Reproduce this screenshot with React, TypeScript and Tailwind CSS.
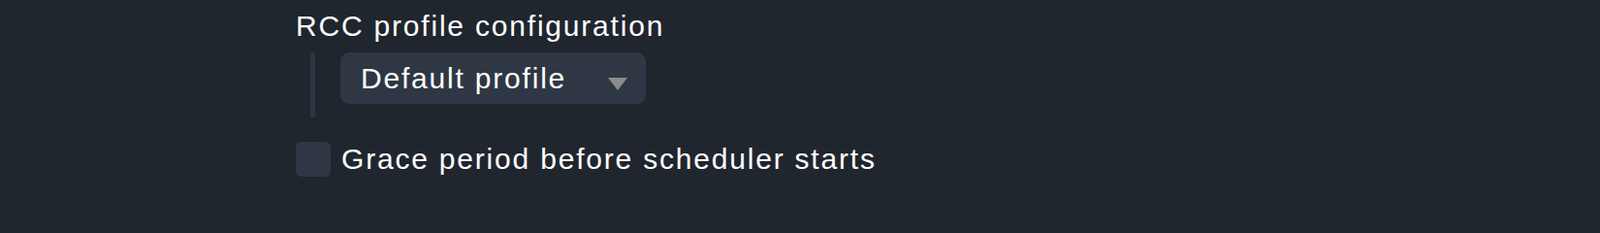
import { useState } from "react";

const SettingsPanel = () => {
  const [grace, setGrace] = useState(false);

  return (
    <div className="min-h-screen bg-[#20262e] text-white antialiased font-['Liberation_Sans',Arial,sans-serif]">
      <div className="pl-[305px] pt-[10px]">
        {/* RCC PROFILE */}
        <h2 className="text-[30px] leading-[34px] tracking-[1.8px]">RCC profile configuration</h2>

        <div className="mt-[10px] ml-[15px] flex">
          <div className="w-[5px] h-[67px] bg-[#2e3541]" />
          <button className="ml-[26px] w-[315px] h-[53px] rounded-[9px] bg-[#2f3744] flex items-center justify-between pl-[21px] pr-[19px]">
            <span className="text-[30px] leading-[34px] tracking-[1.8px]">Default profile</span>
            <svg width="20" height="13" viewBox="0 0 20 13" className="mt-[12px]">
              <polygon points="0,0 20,0 10,13" fill="#8c8c8c" />
            </svg>
          </button>
        </div>

        {/* GRACE PERIOD */}
        <label className="mt-[25px] flex items-center gap-[11px] cursor-pointer">
          <span
            onClick={() => setGrace(!grace)}
            className="w-[36px] h-[36px] rounded-[6px] bg-[#2f3744] flex-shrink-0"
          />
          <span className="text-[30px] leading-[34px] tracking-[1.8px]">Grace period before scheduler starts</span>
        </label>
      </div>
    </div>
  );
};

export default SettingsPanel;
